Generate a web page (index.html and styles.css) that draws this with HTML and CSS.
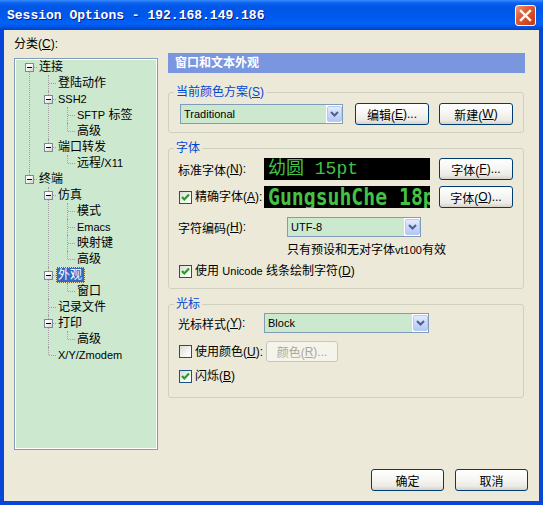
FILE: index.html
```html
<!DOCTYPE html>
<html lang="zh-CN">
<head>
<meta charset="utf-8">
<title>Session Options</title>
<link rel="stylesheet" href="styles.css">
</head>
<body>
<div class="window">
  <div class="titlebar">
    <span class="title">Session Options - 192.168.149.186</span>
    <span class="close"><svg width="19" height="19" viewBox="0 0 19 19"><path d="M5 5L14 14M14 5L5 14" stroke="#fff" stroke-width="2.4" stroke-linecap="square"/></svg></span>
  </div>
  <div class="client">
    <div class="main">
      <div class="left">
        <div class="catlabel">分类(<u>C</u>):</div>
        <div class="tree">
          <ul>
            <li><div class="row"><span class="exp"></span><span class="label">连接</span></div>
              <ul>
                <li><div class="row"><span class="label">登陆动作</span></div></li>
                <li><div class="row"><span class="exp"></span><span class="label"><span class="l">SSH2</span></span></div>
                  <ul>
                    <li><div class="row"><span class="label"><span class="l">SFTP</span> 标签</span></div></li>
                    <li><div class="row"><span class="label">高级</span></div></li>
                  </ul>
                </li>
                <li><div class="row"><span class="exp"></span><span class="label">端口转发</span></div>
                  <ul>
                    <li><div class="row"><span class="label">远程/<span class="l">X11</span></span></div></li>
                  </ul>
                </li>
              </ul>
            </li>
            <li><div class="row"><span class="exp"></span><span class="label">终端</span></div>
              <ul>
                <li><div class="row"><span class="exp"></span><span class="label">仿真</span></div>
                  <ul>
                    <li><div class="row"><span class="label">模式</span></div></li>
                    <li><div class="row"><span class="label"><span class="l">Emacs</span></span></div></li>
                    <li><div class="row"><span class="label">映射键</span></div></li>
                    <li><div class="row"><span class="label">高级</span></div></li>
                  </ul>
                </li>
                <li><div class="row sel"><span class="exp"></span><span class="label">外观</span></div>
                  <ul>
                    <li><div class="row"><span class="label">窗口</span></div></li>
                  </ul>
                </li>
                <li><div class="row"><span class="label">记录文件</span></div></li>
                <li><div class="row"><span class="exp"></span><span class="label">打印</span></div>
                  <ul>
                    <li><div class="row"><span class="label">高级</span></div></li>
                  </ul>
                </li>
                <li><div class="row"><span class="label"><span class="l">X/Y/Zmodem</span></span></div></li>
              </ul>
            </li>
          </ul>
        </div>
      </div>
      <div class="right">
        <div class="header">窗口和文本外观</div>

        <fieldset class="group g1">
          <legend>当前颜色方案(<u>S</u>)</legend>
          <div class="gbody">
            <div class="r">
              <div class="combo w163"><span class="field">Traditional</span><span class="arrow"><svg width="9" height="6" viewBox="0 0 9 6"><path d="M1 1L4.5 4.5L8 1" fill="none" stroke="#4D6185" stroke-width="2"/></svg></span></div>
              <button class="btn">编辑(<u>E</u>)...</button>
              <button class="btn gap10">新建(<u>W</u>)</button>
            </div>
          </div>
        </fieldset>

        <fieldset class="group g2">
          <legend>字体</legend>
          <div class="gbody">
            <div class="r h22">
              <div class="lab w86">标准字体(<u>N</u>):</div>
              <div class="preview pv1">幼圆 15pt</div>
              <button class="btn">字体(<u>F</u>)...</button>
            </div>
            <div class="r h22 mt6">
              <div class="lab w86"><span class="cb on"><svg width="11" height="11" viewBox="0 0 11 11"><path d="M2 5L4.3 7.5L9 2.5" fill="none" stroke="#21A121" stroke-width="2.2"/></svg></span><span class="cbt">精确字体(<u>A</u>):</span></div>
              <div class="preview pv2"><span>GungsuhChe 18pt</span></div>
              <button class="btn">字体(<u>O</u>)...</button>
            </div>
            <div class="r h20 mt9">
              <div class="lab w109">字符编码(<u>H</u>):</div>
              <div class="combo w134"><span class="field">UTF-8</span><span class="arrow"><svg width="9" height="6" viewBox="0 0 9 6"><path d="M1 1L4.5 4.5L8 1" fill="none" stroke="#4D6185" stroke-width="2"/></svg></span></div>
            </div>
            <div class="note">只有预设和无对字体<span class="l">vt100</span>有效</div>
            <div class="r h14 mt7">
              <span class="cb on"><svg width="11" height="11" viewBox="0 0 11 11"><path d="M2 5L4.3 7.5L9 2.5" fill="none" stroke="#21A121" stroke-width="2.2"/></svg></span><span class="cbt">使用 <span class="l">Unicode</span> 线条绘制字符(<u>D</u>)</span>
            </div>
          </div>
        </fieldset>

        <fieldset class="group g3">
          <legend>光标</legend>
          <div class="gbody">
            <div class="r h20">
              <div class="lab w86">光标样式(<u>Y</u>):</div>
              <div class="combo w165"><span class="field">Block</span><span class="arrow"><svg width="9" height="6" viewBox="0 0 9 6"><path d="M1 1L4.5 4.5L8 1" fill="none" stroke="#4D6185" stroke-width="2"/></svg></span></div>
            </div>
            <div class="r h21 mt8">
              <div class="lab w88"><span class="cb"></span><span class="cbt">使用颜色(<u>U</u>):</span></div>
              <button class="btn dis">颜色(<u>R</u>)...</button>
            </div>
            <div class="r h14 mt7">
              <span class="cb on"><svg width="11" height="11" viewBox="0 0 11 11"><path d="M2 5L4.3 7.5L9 2.5" fill="none" stroke="#21A121" stroke-width="2.2"/></svg></span><span class="cbt">闪烁(<u>B</u>)</span>
            </div>
          </div>
        </fieldset>
      </div>
    </div>
    <div class="footer">
      <button class="btn fb">确定</button>
      <button class="btn fb">取消</button>
    </div>
  </div>
</div>
</body>
</html>
```

FILE: styles.css
```css
html, body {
  margin: 0;
  padding: 0;
  background: #ECE9D8;
}
body {
  font-family: "Liberation Sans", "Noto Sans CJK SC", sans-serif;
  font-size: 12px;
  color: #000;
}
.window {
  width: 543px;
  height: 505px;
  display: flex;
  flex-direction: column;
}
.titlebar {
  height: 30px;
  flex: none;
  box-sizing: border-box;
  display: flex;
  align-items: center;
  justify-content: space-between;
  padding: 0 7px 0 7px;
  background: linear-gradient(180deg, #3A8DFF 0px, #0A62EE 3px, #0056E6 7px, #0058EE 16px, #0062F6 24px, #0053E2 27px, #0042C4 30px);
}
.title {
  font-family: "Liberation Mono", monospace;
  font-weight: bold;
  font-size: 13px;
  color: #fff;
  text-shadow: 1px 1px 0 #0A1C8A;
  white-space: nowrap;
}
.close {
  width: 21px;
  height: 21px;
  box-sizing: border-box;
  border: 1px solid #fff;
  border-radius: 3px;
  background: linear-gradient(135deg, #F29A7C 0%, #E0603A 35%, #D2471F 70%, #C23A14 100%);
  display: flex;
  align-items: center;
  justify-content: center;
}
.close svg { display: block; }
.client {
  flex: 1;
  background: #ECE9D8;
  border: 4px solid #0845D8;
  border-top: 0;
  padding: 4px 11px 10px 10px;
  display: flex;
  flex-direction: column;
}
.main {
  display: flex;
  gap: 10px;
  height: 416px;
  flex: none;
}
.left {
  width: 144px;
  flex: none;
}
.catlabel {
  height: 20px;
  line-height: 20px;
  margin-bottom: 4px;
}
u { text-decoration: underline; }
.l { font-size: 11px; }

/* tree */
.tree {
  height: 392px;
  box-sizing: border-box;
  border: 1px solid #7F9DB9;
  box-shadow: inset 0 0 0 1px #fff;
  background: #CCE8CF;
  overflow: hidden;
}
.tree ul {
  list-style: none;
  margin: 0;
  padding: 0 0 0 19px;
}
.tree > ul { padding: 0; }
.tree li { position: relative; }
.tree li::before {
  content: "";
  position: absolute;
  left: 14px;
  top: 0;
  bottom: 0;
  border-left: 1px dotted #A0A0A0;
}
.tree li:last-child::before {
  bottom: auto;
  height: 8px;
}
.tree > ul > li:first-child::before {
  top: 8px;
  height: auto;
  bottom: 0;
}
.row {
  position: relative;
  height: 16px;
  display: flex;
  align-items: center;
  white-space: nowrap;
}
.row::before {
  content: "";
  position: absolute;
  left: 15px;
  top: 8px;
  width: 7px;
  border-top: 1px dotted #A0A0A0;
}
.exp {
  position: absolute;
  left: 10px;
  top: 4px;
  width: 9px;
  height: 9px;
  box-sizing: border-box;
  border: 1px solid #7A8A99;
  background: linear-gradient(135deg, #FFFFFF 30%, #D4D0C8 100%);
}
.exp::after {
  content: "";
  position: absolute;
  left: 1px;
  top: 3px;
  width: 5px;
  height: 1px;
  background: #000;
}
.label {
  margin-left: 22px;
  padding: 0 3px 0 2px;
  line-height: 16px;
  height: 16px;
  box-sizing: border-box;
}
.sel .label {
  background: #316AC5;
  color: #fff;
  outline: 1px dotted #E8E0B0;
  outline-offset: -1px;
}

/* right */
.right {
  width: 357px;
  flex: none;
  margin-top: 19px;
}
.header {
  height: 20px;
  line-height: 20px;
  background: #7A96DF;
  color: #fff;
  font-weight: bold;
  padding-left: 7px;
}
fieldset.group {
  margin: 0;
  padding: 0;
  min-width: 0;
  width: 356px;
  box-sizing: border-box;
  border: 1px solid #D0D0BF;
  border-radius: 3px;
}
legend {
  padding: 0 2px;
  margin-left: 5px;
  line-height: 14px;
  color: #0046D5;
}
fieldset.group.g1 { margin-top: 12px; }
fieldset.group.g2,
fieldset.group.g3 { margin-top: 8px; }
.g1 .gbody { padding: 4px 11px 7px 11px; }
.g2 .gbody { padding: 3px 9px 10px 9px; }
.g3 .gbody { padding: 2px 9px 14px 9px; }
.r {
  display: flex;
  align-items: center;
  white-space: nowrap;
}
.g1 .r { height: 22px; }
.h22 { height: 22px; }
.h21 { height: 21px; }
.h20 { height: 20px; }
.h14 { height: 14px; }
.mt6 { margin-top: 6px; }
.mt7 { margin-top: 7px; }
.mt8 { margin-top: 8px; }
.mt9 { margin-top: 9px; }
.lab {
  flex: none;
  display: flex;
  align-items: center;
  white-space: nowrap;
}
.w86 { width: 86px; }
.w88 { width: 88px; }
.w109 { width: 109px; }

.combo {
  height: 20px;
  box-sizing: border-box;
  border: 1px solid #7F9DB9;
  background: #fff;
  display: flex;
  flex: none;
}
.w163 { width: 163px; margin-right: 12px; }
.w134 { width: 134px; }
.w165 { width: 165px; }
.combo .field {
  flex: 1;
  background: #CCE8CF;
  padding-left: 3px;
  line-height: 18px;
  font-size: 11px;
}
.combo .arrow {
  width: 15px;
  margin: 1px 0 1px 1px;
  box-sizing: border-box;
  border: 1px solid #B7C9F3;
  border-radius: 2px;
  background: linear-gradient(180deg, #E4ECFD 0%, #C9D8FC 50%, #B4C8F6 100%);
  display: flex;
  align-items: center;
  justify-content: center;
}
.combo .arrow svg { display: block; }

.btn {
  font-family: inherit;
  font-size: 12px;
  color: #000;
  width: 74px;
  height: 22px;
  flex: none;
  box-sizing: border-box;
  margin: 0;
  padding: 0;
  border: 1px solid #003C74;
  border-radius: 3px;
  background: linear-gradient(180deg, #FFFFFF 0%, #F6F6F3 45%, #ECEBE6 80%, #D8D2C6 100%);
  display: flex;
  align-items: center;
  justify-content: center;
}
.gap10 { margin-left: 10px; }
.btn.dis {
  width: 72px;
  height: 21px;
  border-color: #C9C7BA;
  background: #F5F4EA;
  color: #ACA899;
}

.preview {
  flex: none;
  width: 166px;
  height: 22px;
  margin-right: 9px;
  background: #000;
  color: #45C145;
  overflow: hidden;
  white-space: nowrap;
}
.pv1 {
  font-family: "Liberation Mono", "Noto Sans CJK SC", monospace;
  font-size: 18px;
  line-height: 22px;
  padding-left: 4px;
  box-sizing: border-box;
}
.pv2 {
  font-family: "DejaVu Sans Mono", monospace;
  font-size: 23px;
  font-weight: bold;
  line-height: 22px;
  padding-left: 4px;
  box-sizing: border-box;
}
.pv2 span {
  display: inline-block;
  transform: scaleX(0.86);
  transform-origin: left center;
}

.cb {
  width: 13px;
  height: 13px;
  flex: none;
  box-sizing: border-box;
  margin-left: 1px;
  border: 1px solid #1C5180;
  background: linear-gradient(135deg, #DCDCD7 0%, #F4F4F0 60%, #FFFFFF 100%);
  display: flex;
  align-items: center;
  justify-content: center;
}
.cb svg { display: block; }
.cbt { margin-left: 3px; line-height: 14px; }
.note {
  margin-top: 6px;
  line-height: 14px;
  padding-left: 109px;
  white-space: nowrap;
}

.footer {
  display: flex;
  justify-content: flex-end;
  gap: 11px;
  margin-top: 19px;
}
.btn.fb { width: 73px; height: 22px; }
```
